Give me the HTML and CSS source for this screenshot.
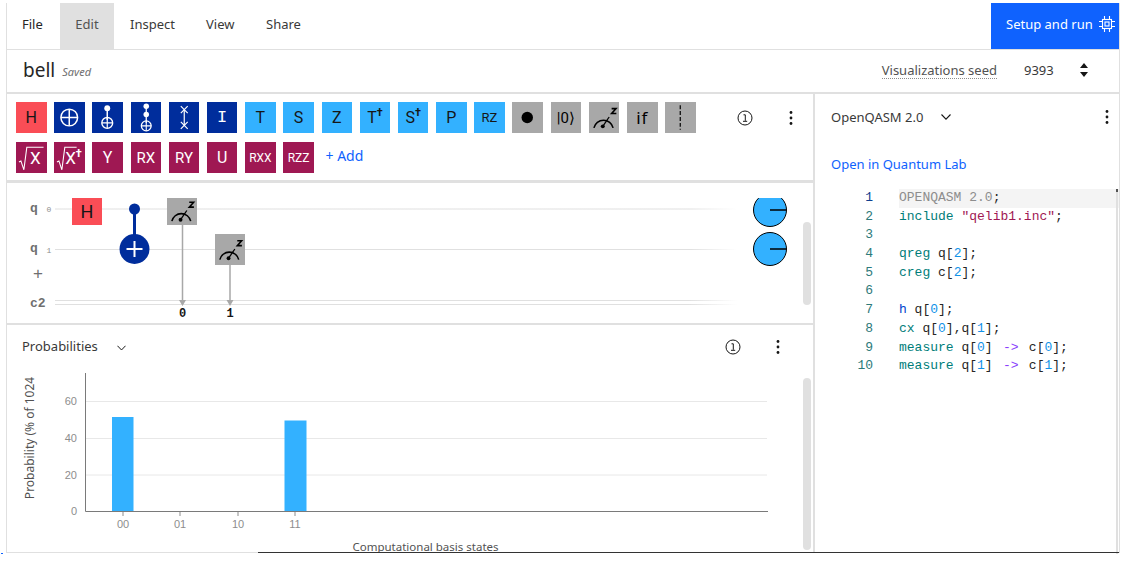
FILE: index.html
```html
<!DOCTYPE html>
<html lang="en">
<head>
<meta charset="utf-8">
<title>bell</title>
<link rel="stylesheet" href="styles.css">
</head>
<body>
<svg class="defs" width="0" height="0" aria-hidden="true">
  <symbol id="meas" viewBox="0 0 31 31">
    <path d="M5 26A10 10 0 0 1 24.500 26" fill="none" stroke="#000" stroke-width="1.600"/>
    <path d="M14 24.500L20.500 15" stroke="#000" stroke-width="1.300"/>
    <circle cx="14" cy="24.500" r="2" fill="#000"/>
    <path d="M23 6.500h4.500l-4.500 5h4.800" fill="none" stroke="#000" stroke-width="1.600"/>
  </symbol>
  <symbol id="info" viewBox="0 0 16 16">
    <circle cx="8" cy="8" r="7" fill="none" stroke="#161616" stroke-width="1"/>
    <path d="M6.500 4.800h1.800v6M6 11.300h4.200" fill="none" stroke="#161616" stroke-width="1"/>
  </symbol>
  <symbol id="dots" viewBox="0 0 4 16">
    <circle cx="2" cy="2.500" r="1.400" fill="#161616"/>
    <circle cx="2" cy="8" r="1.400" fill="#161616"/>
    <circle cx="2" cy="13.500" r="1.400" fill="#161616"/>
  </symbol>
  <symbol id="chev" viewBox="0 0 10 6">
    <path d="M.5 .5L5 5.200 9.500 .5" fill="none" stroke="#161616" stroke-width="1.100"/>
  </symbol>
</svg>

<div class="app">
  <nav class="menubar">
    <a class="tab tab-file">File</a>
    <a class="tab tab-active">Edit</a>
    <a class="tab tab-inspect">Inspect</a>
    <a class="tab tab-view">View</a>
    <a class="tab tab-share">Share</a>
    <button class="run"><span>Setup and run</span>
      <svg class="chip" viewBox="0 0 16 16" width="16" height="16">
        <rect x="3.500" y="3.500" width="9" height="9" fill="none" stroke="#fff" stroke-width="1.100"/>
        <rect x="6" y="6" width="4" height="4" fill="none" stroke="#fff" stroke-width="1.100"/>
        <path d="M0 5.500h3.500M0 10.500h3.500M12.500 5.500H16M12.500 10.500H16M5.500 0v3.500M10.500 0v3.500M5.500 12.500V16M10.500 12.500V16" stroke="#fff" stroke-width="1.100"/>
      </svg>
    </button>
  </nav>

  <header class="titlebar">
    <span class="name">bell</span>
    <span class="saved">Saved</span>
    <span class="seed-label">Visualizations seed</span>
    <span class="seed-value">9393</span>
    <svg class="stepper" viewBox="0 0 10 16" width="10" height="16">
      <path d="M5 1L9 6H1z M1 10h8L5 15z" fill="#161616"/>
    </svg>
  </header>

  <div class="workspace">
    <main class="left">
      <section class="toolbar">
        <div class="palette">
          <div class="gate-row">
            <div class="gate red">H</div>
            <div class="gate navy">
              <svg viewBox="0 0 31 31"><circle cx="15.500" cy="15.500" r="8.500" fill="none" stroke="#fff" stroke-width="1.500"/><path d="M7 15.500h17M15.500 7v17" stroke="#fff" stroke-width="1.500"/></svg>
            </div>
            <div class="gate navy">
              <svg viewBox="0 0 31 31"><circle cx="15.500" cy="6" r="3" fill="#fff"/><path d="M15.500 6v12" stroke="#fff" stroke-width="1.500"/><circle cx="15.500" cy="21" r="5.500" fill="none" stroke="#fff" stroke-width="1.400"/><path d="M10 21h11M15.500 15.500v11" stroke="#fff" stroke-width="1.200"/></svg>
            </div>
            <div class="gate navy">
              <svg viewBox="0 0 31 31"><circle cx="15.500" cy="4" r="2.800" fill="#fff"/><circle cx="15.500" cy="12.500" r="2.800" fill="#fff"/><path d="M15.500 4v17" stroke="#fff" stroke-width="1.300"/><circle cx="15.500" cy="24" r="5" fill="none" stroke="#fff" stroke-width="1.300"/><path d="M10.500 24h10M15.500 19v10" stroke="#fff" stroke-width="1.100"/></svg>
            </div>
            <div class="gate navy">
              <svg viewBox="0 0 31 31"><path d="M12 4l7 7M19 4l-7 7M12 20l7 7M19 20l-7 7" stroke="#fff" stroke-width="1.200"/><path d="M15.500 7.500v16" stroke="#fff" stroke-width="1.200"/></svg>
            </div>
            <div class="gate navy id">I</div>
            <div class="gate cyan">T</div>
            <div class="gate cyan">S</div>
            <div class="gate cyan">Z</div>
            <div class="gate cyan"><span>T<sup>†</sup></span></div>
            <div class="gate cyan"><span>S<sup>†</sup></span></div>
            <div class="gate cyan">P</div>
            <div class="gate cyan small">RZ</div>
            <div class="gate gray">
              <svg viewBox="0 0 31 31"><circle cx="15.500" cy="15.500" r="5.800" fill="#000"/></svg>
            </div>
            <div class="gate gray ket">|0⟩</div>
            <div class="gate gray"><svg viewBox="0 0 31 31"><use href="#meas"/></svg></div>
            <div class="gate gray iff">if</div>
            <div class="gate gray">
              <svg viewBox="0 0 31 31"><path d="M15.500 3v25" stroke="#000" stroke-width="1.200" stroke-dasharray="4 2"/></svg>
            </div>
          </div>
          <div class="gate-row">
            <div class="gate wine root"><svg class="radical" viewBox="0 0 31 31"><path d="M3 20l2-1 3 9 3-23h17" fill="none" stroke="#fff" stroke-width="1.100"/></svg><span>X</span></div>
            <div class="gate wine root"><svg class="radical" viewBox="0 0 31 31"><path d="M3 20l2-1 3 9 3-23h12" fill="none" stroke="#fff" stroke-width="1.100"/></svg><span>X<sup>†</sup></span></div>
            <div class="gate wine">Y</div>
            <div class="gate wine mid">RX</div>
            <div class="gate wine mid">RY</div>
            <div class="gate wine">U</div>
            <div class="gate wine tiny">RXX</div>
            <div class="gate wine tiny">RZZ</div>
            <a class="add">+ Add</a>
          </div>
        </div>
        <svg class="icon-info"><use href="#info"/></svg>
        <svg class="icon-dots"><use href="#dots"/></svg>
      </section>

      <section class="circuit">
        <svg class="circuit-svg" viewBox="0 0 796 140" width="796" height="140">
          <defs>
            <linearGradient id="fade" x1="0" x2="1" y1="0" y2="0">
              <stop offset="0" stop-color="#e0e0e0"/><stop offset=".93" stop-color="#e0e0e0"/><stop offset="1" stop-color="#fff"/>
            </linearGradient>
          </defs>
          <rect x="48" y="25.500" width="682" height="1" fill="url(#fade)"/>
          <rect x="48" y="66" width="682" height="1" fill="url(#fade)"/>
          <rect x="48" y="117" width="682" height="1" fill="url(#fade)"/>
          <rect x="48" y="121" width="682" height="1" fill="url(#fade)"/>
          <text class="wire-label" x="23" y="29">q</text>
          <text class="wire-index" x="42" y="29">0</text>
          <text class="wire-label" x="23" y="69">q</text>
          <text class="wire-index" x="42" y="70">1</text>
          <text class="wire-plus" x="31" y="96">+</text>
          <text class="wire-label" x="23" y="124">c2</text>

          <rect x="65" y="15" width="30" height="27" fill="#fa4d56"/>
          <text class="h-gate" x="80" y="35">H</text>

          <path d="M127.500 26v40" stroke="#002d9c" stroke-width="3"/>
          <circle cx="127.500" cy="26" r="5.500" fill="#002d9c"/>
          <circle cx="127.500" cy="66" r="15" fill="#002d9c"/>
          <path d="M119.500 66h16M127.500 58v16" stroke="#fff" stroke-width="2"/>

          <path d="M175.500 42v75M223 82v35" stroke="#a8a8a8" stroke-width="1.500"/>
          <path d="M172 117h7l-3.500 6zM219.500 117h7l-3.500 6z" fill="#a8a8a8"/>
          <rect x="160" y="15" width="30" height="27" fill="#a8a8a8"/>
          <use href="#meas" x="160" y="13" width="30" height="30"/>
          <rect x="208" y="51" width="30" height="31" fill="#a8a8a8"/>
          <use href="#meas" x="208" y="51" width="30" height="31"/>
          <text class="bit" x="175.500" y="134">0</text>
          <text class="bit" x="223" y="134">1</text>

          <clipPath id="clip"><rect x="740" y="15" width="50" height="90"/></clipPath>
          <g clip-path="url(#clip)">
            <circle cx="763" cy="27" r="16.500" fill="#33b1ff" stroke="#000" stroke-width="1"/>
            <path d="M763 27h16" stroke="#000" stroke-width="1.500"/>
            <circle cx="763" cy="66" r="16.500" fill="#33b1ff" stroke="#000" stroke-width="1"/>
            <path d="M763 66h16" stroke="#000" stroke-width="1.500"/>
          </g>
        </svg>
        <div class="scroll scroll-circuit"></div>
      </section>

      <section class="probs">
        <div class="probs-head">
          <span class="probs-title">Probabilities</span>
          <svg class="chev-probs"><use href="#chev"/></svg>
          <svg class="icon-info2"><use href="#info"/></svg>
          <svg class="icon-dots2"><use href="#dots"/></svg>
        </div>
        <svg class="chart" viewBox="0 0 796 192" width="796" height="192">
          <path d="M78 40.500H760M78 77.500H760M78 114H760" stroke="#e8e8e8" stroke-width="1"/>
          <rect x="105" y="56" width="21.500" height="94.500" fill="#33b1ff"/>
          <rect x="277.500" y="59.500" width="22" height="91" fill="#33b1ff"/>
          <path d="M78.500 12v138.500H761" fill="none" stroke="#7a7a7a" stroke-width="1"/>
          <path d="M116 151v4M173 151v4M231 151v4M288 151v4" stroke="#8d8d8d"/>
          <g class="y-ticks">
            <text x="70" y="44">60</text>
            <text x="70" y="81">40</text>
            <text x="70" y="117.500">20</text>
            <text x="70" y="154">0</text>
          </g>
          <g class="x-ticks">
            <text x="116" y="166.500">00</text>
            <text x="173" y="166.500">01</text>
            <text x="231" y="166.500">10</text>
            <text x="288" y="166.500">11</text>
          </g>
          <text class="y-title" transform="translate(27 77) rotate(-90)">Probability (% of 1024</text>
          <text class="x-title" x="418.500" y="190">Computational basis states</text>
        </svg>
        <div class="scroll scroll-probs"></div>
      </section>
    </main>

    <aside class="right">
      <div class="lang-row">
        <span class="lang">OpenQASM 2.0</span>
        <svg class="chev-lang"><use href="#chev"/></svg>
        <svg class="icon-dots3"><use href="#dots"/></svg>
      </div>
      <a class="lab">Open in Quantum Lab</a>
      <div class="code">
        <div class="line active"><span class="num">1</span><code><span class="c-dim">OPENQASM 2.0</span>;</code></div>
        <div class="line"><span class="num">2</span><code><span class="c-kw">include</span> <span class="c-str">"qelib1.inc"</span>;</code></div>
        <div class="line"><span class="num">3</span><code></code></div>
        <div class="line"><span class="num">4</span><code><span class="c-kw">qreg</span> q[<span class="c-n">2</span>];</code></div>
        <div class="line"><span class="num">5</span><code><span class="c-kw">creg</span> c[<span class="c-n">2</span>];</code></div>
        <div class="line"><span class="num">6</span><code></code></div>
        <div class="line"><span class="num">7</span><code><span class="c-fn">h</span> q[<span class="c-n">0</span>];</code></div>
        <div class="line"><span class="num">8</span><code><span class="c-fn2">cx</span> q[<span class="c-n">0</span>],q[<span class="c-n">1</span>];</code></div>
        <div class="line"><span class="num">9</span><code><span class="c-kw">measure</span> q[<span class="c-n">0</span>] <span class="c-op">-&gt;</span> c[<span class="c-n">0</span>];</code></div>
        <div class="line"><span class="num">10</span><code><span class="c-kw">measure</span> q[<span class="c-n">1</span>] <span class="c-op">-&gt;</span> c[<span class="c-n">1</span>];</code></div>
      </div>
    </aside>
  </div>
  <div class="foot-rule"></div>
</div>
<div class="speck"></div>
</body>
</html>
```

FILE: styles.css
```css
* { box-sizing: border-box; }
html, body { margin: 0; padding: 0; background: #fff; }
body {
  width: 1123px;
  height: 567px;
  overflow: hidden;
  position: relative;
  font-family: "Noto Sans", "Open Sans", sans-serif;
  color: #161616;
}
.defs { position: absolute; }
.app {
  margin: 3px 0 0 6px;
  width: 1114px;
  border-left: 1px solid #e0e0e0;
  border-right: 1px solid #e0e0e0;
}

/* menu */
.menubar {
  display: flex;
  height: 47px;
  border-bottom: 1px solid #e0e0e0;
  align-items: stretch;
  font-size: 13px;
}
.tab {
  display: flex;
  align-items: center;
  padding: 0 0 5px 16px;
  color: #393939;
}
.tab-file { width: 53px; padding-left: 15px; color: #262626; }
.tab-active { width: 54px; background: #e0e0e0; color: #525252; padding-left: 0; justify-content: center; }
.tab-inspect { width: 76px; }
.tab-view { width: 60px; }
.tab-share { width: 60px; }
.run {
  margin-left: auto;
  width: 128px;
  height: 46px;
  border: 0;
  background: #0f62fe;
  color: #fff;
  font: 13px "Noto Sans", sans-serif;
  display: flex;
  align-items: center;
  padding: 0 4px 5px 15px;
  justify-content: space-between;
  white-space: nowrap;
}
.chip { flex: none; }

/* title */
.titlebar {
  height: 44px;
  border-bottom: 2px solid #e0e0e0;
  display: flex;
  align-items: center;
  padding: 0 0 3px 16px;
  font-size: 13px;
}
.name { font-size: 19px; color: #262626; }
.saved { font-size: 11px; font-style: italic; color: #6f6f6f; margin-left: 7px; margin-top: 4px; }
.seed-label { margin-left: auto; color: #525252; border-bottom: 1px dotted #8d8d8d; line-height: 15px; margin-top: 2px; }
.seed-value { margin-left: 27px; width: 32px; color: #393939; }
.stepper { margin-left: 23px; margin-right: 30px; }

/* workspace */
.workspace { display: flex; height: 459px; }
.left { width: 806px; flex: none; display: flex; flex-direction: column; }
.right { flex: 1; border-left: 2px solid #e0e0e0; min-width: 0; }

/* toolbar */
.toolbar {
  height: 89px;
  border-bottom: 3px solid #e0e0e0;
  display: flex;
  padding: 8px 0 0 9px;
  position: relative;
}
.palette { display: flex; flex-direction: column; gap: 9px; }
.gate-row { display: flex; gap: 7.700px; align-items: center; }
.gate {
  width: 30.500px;
  height: 31px;
  display: flex;
  align-items: center;
  justify-content: center;
  font-size: 16px;
  font-family: "Roboto", sans-serif;
  flex: none;
}
.gate svg { width: 100%; height: 100%; display: block; }
.gate sup { font-size: 11px; line-height: 0; font-weight: 700; vertical-align: 7px; }
.red { background: #fa4d56; color: #161616; }
.navy { background: #002d9c; color: #fff; }
.cyan { background: #33b1ff; color: #161616; }
.gray { background: #a8a8a8; color: #000; }
.wine { background: #9f1853; color: #fff; }
.id { font: 17px "Liberation Mono", monospace; }
.small { font-size: 13px; }
.mid { font-size: 15px; }
.tiny { font-size: 12px; }
.ket { font-size: 15px; }
.iff { font-size: 17px; letter-spacing: 1px; font-family: "Noto Sans", sans-serif; }
.root { position: relative; padding-left: 8px; font-size: 17px; }
.root .radical { position: absolute; inset: 0; }
.add { color: #0f62fe; font-size: 14px; margin-left: 4px; margin-top: -4px; }
.icon-info { position: absolute; left: 730px; top: 16px; width: 16px; height: 16px; }
.icon-dots { position: absolute; left: 782px; top: 16px; width: 4px; height: 16px; }

/* circuit */
.circuit { height: 142px; border-bottom: 2px solid #e0e0e0; position: relative; flex: none; }
.circuit-svg { display: block; }
.wire-label { font: 700 13px "Liberation Mono", monospace; fill: #6f6f6f; }
.wire-index { font: 8px "Liberation Mono", monospace; fill: #8d8d8d; text-anchor: middle; }
.wire-plus { font: 17px "Liberation Sans", sans-serif; fill: #6f6f6f; text-anchor: middle; }
.h-gate { font: 18px "Roboto", sans-serif; fill: #161616; text-anchor: middle; }
.bit { font: 700 12px "Liberation Mono", monospace; fill: #161616; text-anchor: middle; }
.scroll { position: absolute; background: #e0e0e0; border-radius: 4px; width: 8px; }
.scroll-circuit { left: 796px; top: 39px; height: 83px; }
.scroll-probs { left: 796px; top: 53px; height: 172px; }

/* probabilities */
.probs { flex: 1; position: relative; min-height: 0; overflow: hidden; }
.probs-head { height: 36px; display: flex; align-items: flex-end; position: relative; padding-left: 15px; padding-bottom: 6px; font-size: 13px; }
.probs-title { color: #393939; }
.chev-probs { width: 9px; height: 6px; margin-left: 19px; margin-bottom: 4px; }
.icon-info2 { position: absolute; left: 718px; top: 14px; width: 16px; height: 16px; }
.icon-dots2 { position: absolute; left: 769px; top: 14px; width: 4px; height: 16px; }
.chart { display: block; }
.y-ticks text, .x-ticks text { font: 11px "Liberation Sans", sans-serif; fill: #8d8d8d; }
.y-ticks text { text-anchor: end; }
.x-ticks text { text-anchor: middle; }
.y-title { font: 12px "Noto Sans", sans-serif; fill: #525252; text-anchor: middle; }
.x-title { font: 11.500px "Noto Sans", sans-serif; fill: #525252; text-anchor: middle; }

/* editor */
.lang-row { height: 46px; display: flex; align-items: center; padding-left: 16px; font-size: 13px; position: relative; }
.lang { color: #393939; }
.chev-lang { width: 10px; height: 6px; margin-left: 18px; }
.icon-dots3 { position: absolute; right: 10px; top: 15px; width: 4px; height: 16px; }
.lab { display: block; color: #0f62fe; font-size: 13px; margin: 15px 0 0 16px; line-height: 18px; }
.code { margin-top: 16px; font: 13px/18.700px "Liberation Mono", monospace; position: relative; }
.code::after { content: ""; position: absolute; right: 1px; top: 0; height: 362px; width: 2px; background: #e0e0e0; border-top: 3px solid #525252; }
.line { display: flex; height: 18.700px; }
.num { width: 58px; text-align: right; color: #2d7a7a; flex: none; }
.line code { font: inherit; margin-left: 26px; flex: 1; color: #262626; white-space: pre; }
.active code { background: #f4f4f4; }
.active .num { color: #0f3f8f; }
.c-dim { color: #8d8d8d; }
.c-kw { color: #007d79; }
.c-str { color: #9f1853; }
.c-n { color: #1192e8; }
.c-fn { color: #0043ce; }
.c-fn2 { color: #007d79; }
.c-op { color: #8a3ffc; margin: 0 2.500px; }

.foot-rule {
  height: 1px;
  margin-top: -1px;
  position: relative;
  background: linear-gradient(to right, #e0e0e0 251px, #333 251px);
}
.speck { position: absolute; left: 1px; top: 553px; width: 2px; height: 1px; background: #0f62fe; }
```
